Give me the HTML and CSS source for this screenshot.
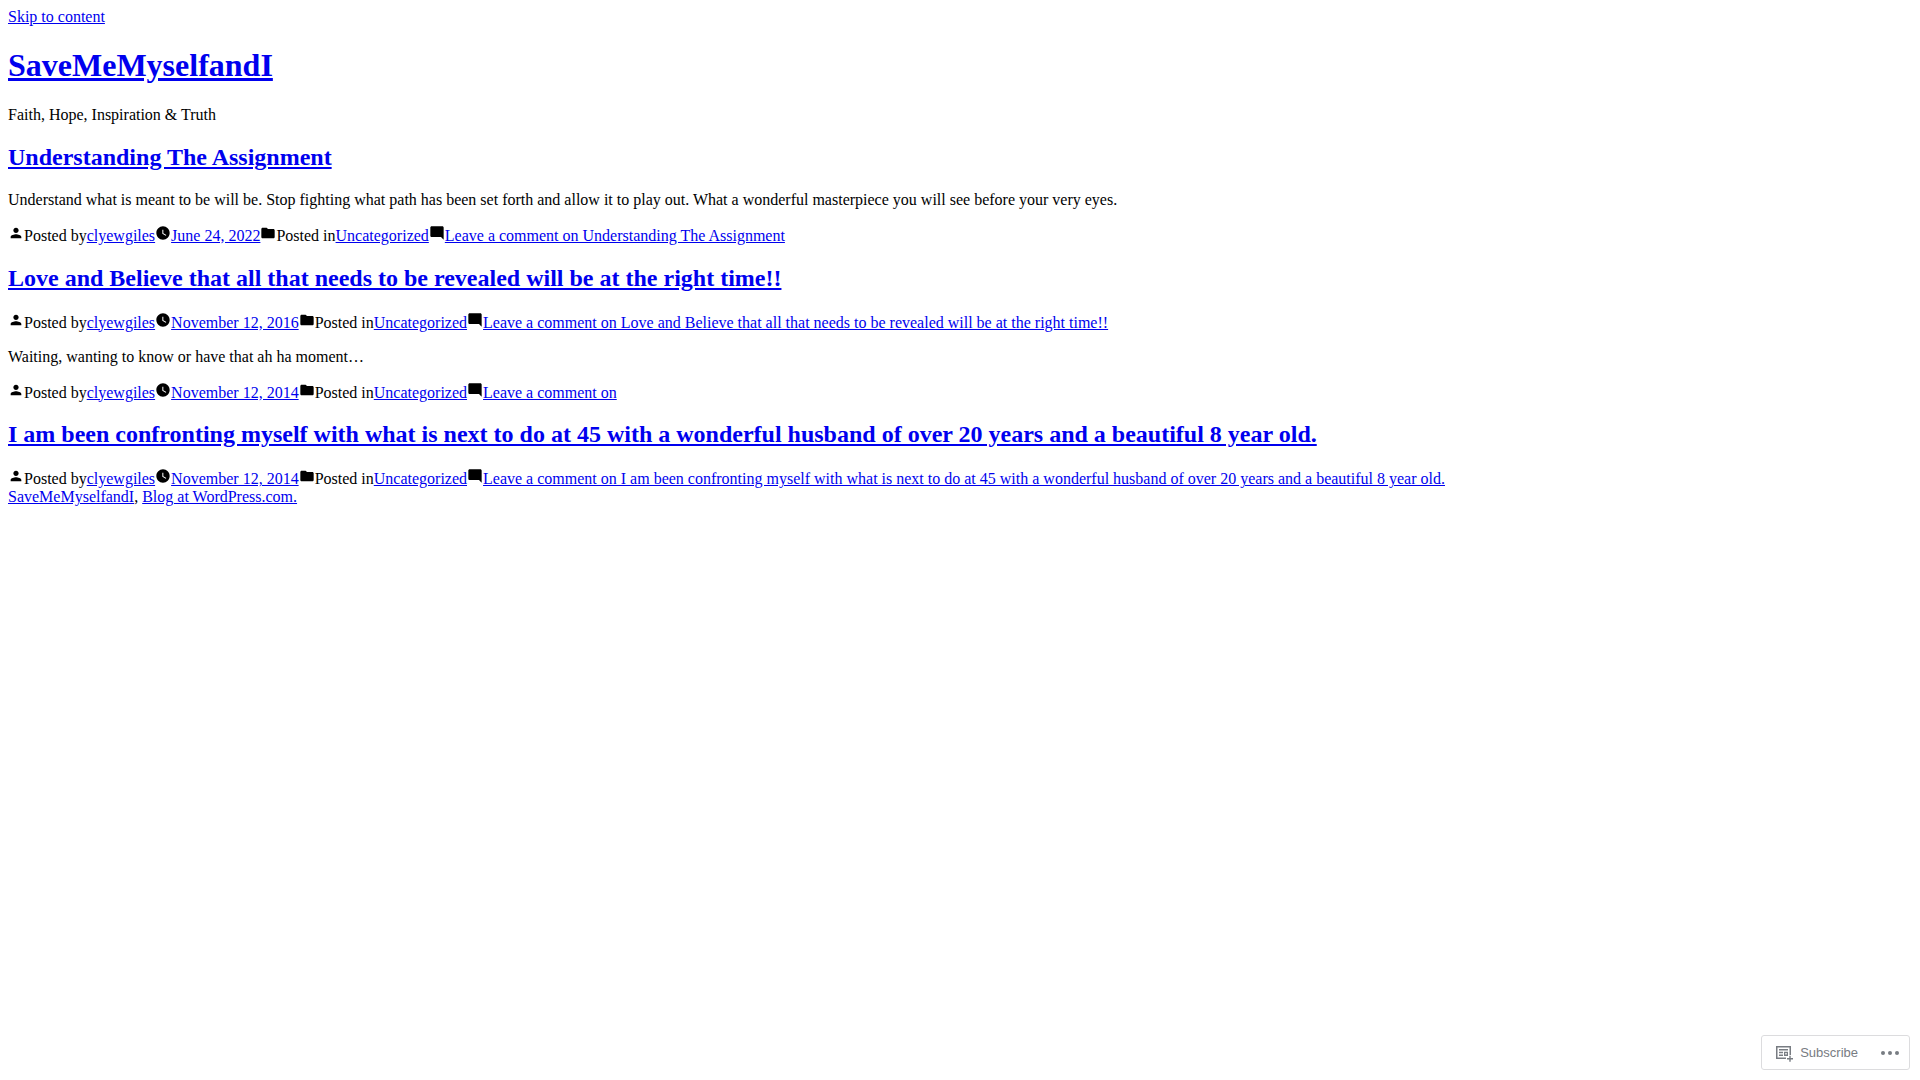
FILE: index.html
```html
<!DOCTYPE html>
<html lang="en">
<head>
    <meta charset="UTF-8">
    <meta name="viewport" content="width=device-width, initial-scale=1.0">
    <title>SaveMeMyselfandI</title>
    <link rel="stylesheet" href="styles.css">
</head>
<body>
    <!-- Shared icons -->
    <svg class="icon-sprite" aria-hidden="true">
        <symbol id="icon-person" viewBox="0 0 24 24">
            <path d="M12 12c2.21 0 4-1.79 4-4s-1.79-4-4-4-4 1.79-4 4 1.79 4 4 4zm0 2c-2.67 0-8 1.34-8 4v2h16v-2c0-2.66-5.33-4-8-4z"/>
        </symbol>
        <symbol id="icon-watch" viewBox="0 0 24 24">
            <path fill-rule="evenodd" d="M12 2C6.5 2 2 6.5 2 12s4.5 10 10 10 10-4.5 10-10S17.5 2 12 2zm4.2 14.2L11 13V7h1.5v5.2l4.5 2.7-.8 1.3z"/>
        </symbol>
        <symbol id="icon-archive" viewBox="0 0 24 24">
            <path d="M10 4H4c-1.1 0-1.99.9-1.99 2L2 18c0 1.1.9 2 2 2h16c1.1 0 2-.9 2-2V8c0-1.1-.9-2-2-2h-8l-2-2z"/>
        </symbol>
        <symbol id="icon-comment" viewBox="0 0 24 24">
            <path d="M21.99 4c0-1.1-.89-2-1.99-2H4c-1.1 0-2 .9-2 2v12c0 1.1.9 2 2 2h14l4 4-.01-18z"/>
        </symbol>
    </svg>

    <a href="#content">Skip to content</a>

    <header>
        <h1><a href="#">SaveMeMyselfandI</a></h1>
        <p>Faith, Hope, Inspiration &amp; Truth</p>
    </header>

    <main id="content">
        <article>
            <h2><a href="#">Understanding The Assignment</a></h2>
            <p>Understand what is meant to be will be. Stop fighting what path has been set forth and allow it to play out. What a wonderful masterpiece you will see before your very eyes.</p>
            <footer><svg class="icon"><use href="#icon-person"/></svg>Posted by<a href="#">clyewgiles</a><svg class="icon"><use href="#icon-watch"/></svg><a href="#"><time datetime="2022-06-24">June 24, 2022</time></a><svg class="icon"><use href="#icon-archive"/></svg>Posted in<a href="#">Uncategorized</a><svg class="icon"><use href="#icon-comment"/></svg><a href="#">Leave a comment on Understanding The Assignment</a></footer>
        </article>

        <article>
            <h2><a href="#">Love and Believe that all that needs to be revealed will be at the right time!!</a></h2>
            <footer><svg class="icon"><use href="#icon-person"/></svg>Posted by<a href="#">clyewgiles</a><svg class="icon"><use href="#icon-watch"/></svg><a href="#"><time datetime="2016-11-12">November 12, 2016</time></a><svg class="icon"><use href="#icon-archive"/></svg>Posted in<a href="#">Uncategorized</a><svg class="icon"><use href="#icon-comment"/></svg><a href="#">Leave a comment on Love and Believe that all that needs to be revealed will be at the right time!!</a></footer>
        </article>

        <article>
            <p>Waiting, wanting to know or have that ah ha moment…</p>
            <footer><svg class="icon"><use href="#icon-person"/></svg>Posted by<a href="#">clyewgiles</a><svg class="icon"><use href="#icon-watch"/></svg><a href="#"><time datetime="2014-11-12">November 12, 2014</time></a><svg class="icon"><use href="#icon-archive"/></svg>Posted in<a href="#">Uncategorized</a><svg class="icon"><use href="#icon-comment"/></svg><a href="#">Leave a comment on</a></footer>
        </article>

        <article>
            <h2><a href="#">I am been confronting myself with what is next to do at 45 with a wonderful husband of over 20 years and a beautiful 8 year old.</a></h2>
            <footer><svg class="icon"><use href="#icon-person"/></svg>Posted by<a href="#">clyewgiles</a><svg class="icon"><use href="#icon-watch"/></svg><a href="#"><time datetime="2014-11-12">November 12, 2014</time></a><svg class="icon"><use href="#icon-archive"/></svg>Posted in<a href="#">Uncategorized</a><svg class="icon"><use href="#icon-comment"/></svg><a href="#">Leave a comment on I am been confronting myself with what is next to do at 45 with a wonderful husband of over 20 years and a beautiful 8 year old.</a></footer>
        </article>
    </main>

    <footer>
        <a href="#">SaveMeMyselfandI</a>, <a href="#">Blog at WordPress.com.</a>
    </footer>

    <div class="actionbar">
        <button class="actionbar-subscribe" type="button">
            <svg class="actionbar-icon" viewBox="0 0 20 20" aria-hidden="true">
                <path fill-rule="evenodd" d="M2 3h15v9h-1.5V4.5h-12v10H12V16H2z"/>
                <path d="M5 6h9v1.4H5zM5 8.8h4v1.4H5zM5 11.5h4v1.4H5z"/>
                <path fill-rule="evenodd" d="M10 8.8h4v4.1h-4zm1.3 1.3v1.5h1.4v-1.5z"/>
                <path d="M15.3 12.7h1.4V15H19v1.4h-2.3v2.3h-1.4v-2.3H13V15h2.3z"/>
            </svg>
            Subscribe
        </button>
        <button class="actionbar-more" type="button" aria-label="More options">
            <svg class="actionbar-dots" viewBox="0 0 24 24" aria-hidden="true">
                <circle cx="5" cy="12" r="2"/>
                <circle cx="12" cy="12" r="2"/>
                <circle cx="19" cy="12" r="2"/>
            </svg>
        </button>
    </div>
</body>
</html>
```
FILE: styles.css
```css
body {
    font-family: "Liberation Serif", "Times New Roman", serif;
}
a {
    color: #0000ee;
}
.icon-sprite {
    display: none;
}
.icon {
    width: 16px;
    height: 16px;
}
.actionbar {
    position: fixed;
    right: 10px;
    bottom: 10px;
    display: flex;
    align-items: center;
    box-sizing: border-box;
    height: 35px;
    padding: 0 7px 0 12px;
    border: 1px solid #dcdcde;
    border-radius: 3px;
    background-color: #fff;
}
.actionbar button {
    display: flex;
    align-items: center;
    padding: 0;
    border: none;
    background: none;
    color: #787c82;
    font-family: "Liberation Sans", Arial, sans-serif;
    font-size: 13px;
    cursor: pointer;
}
.actionbar svg {
    fill: currentColor;
}
.actionbar-subscribe {
    gap: 6px;
    margin-right: 20px;
}
.actionbar-icon {
    width: 20px;
    height: 20px;
}
.actionbar-dots {
    width: 24px;
    height: 24px;
}
```
